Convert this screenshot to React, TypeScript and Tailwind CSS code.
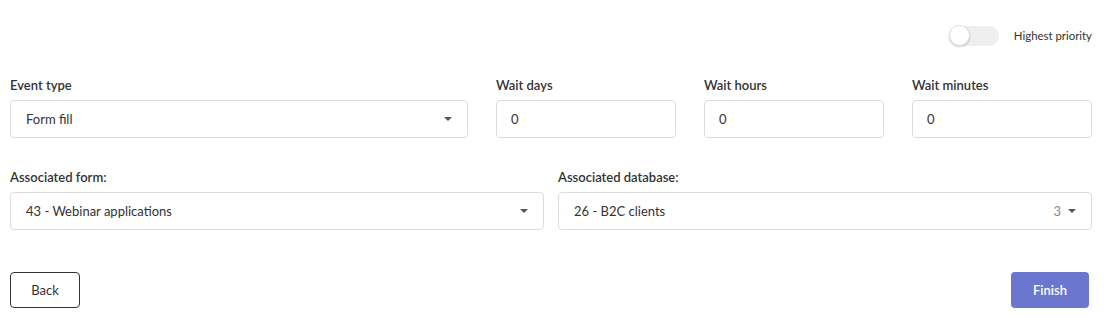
import React from "react";

const Caret = () => (
  <svg width="8" height="4" viewBox="0 0 8 4" className="shrink-0">
    <path d="M0 0 L8 0 L4 4 Z" fill="#555" />
  </svg>
);

function Label({ children }: { children: React.ReactNode }) {
  return (
    <div className="h-[16px] leading-[16px] pt-[1px] text-[13px] font-semibold text-[#333] mb-[8px]">
      {children}
    </div>
  );
}

function Select({ value, count }: { value: string; count?: string }) {
  return (
    <div className="h-[38px] border border-[#dcdcdc] rounded-[4px] bg-white flex items-center pl-[15px] pr-[15px] text-[13px] text-[#333]">
      <span className="flex-1 pt-[2px]">{value}</span>
      {count && <span className="text-[#888] mr-[7px] pt-[2px]">{count}</span>}
      <Caret />
    </div>
  );
}

function Input({ value }: { value: string }) {
  return (
    <div className="h-[38px] border border-[#dcdcdc] rounded-[4px] bg-white flex items-center pl-[14px] pt-[2px] text-[13px] text-[#333]">
      {value}
    </div>
  );
}

export default function App() {
  return (
    <div
      className="w-[1104px] h-[318px] bg-white pl-[10px] pr-[12px] pt-[25px]"
      style={{ fontFamily: "Lato, 'Noto Sans', sans-serif" }}
    >
      <div className="flex justify-end items-center h-[21px]">
        <div className="relative w-[50px] h-[20px] rounded-full bg-[#efefef]">
          <div className="absolute left-0 top-[-0.5px] w-[21px] h-[21px] rounded-full bg-white border border-[#e0e0e0] shadow-[0_1px_2px_rgba(0,0,0,0.2)]" />
        </div>
        <span className="ml-[15px] pt-[1px] text-[11.4px] text-[#333]">Highest priority</span>
      </div>

      <div className="mt-[30px] flex gap-[28px]">
        <div className="w-[458px]">
          <Label>Event type</Label>
          <Select value="Form fill" />
        </div>
        <div className="w-[180px]">
          <Label>Wait days</Label>
          <Input value="0" />
        </div>
        <div className="w-[180px]">
          <Label>Wait hours</Label>
          <Input value="0" />
        </div>
        <div className="w-[180px]">
          <Label>Wait minutes</Label>
          <Input value="0" />
        </div>
      </div>

      <div className="mt-[30px] flex gap-[14px]">
        <div className="flex-1">
          <Label>Associated form:</Label>
          <Select value="43 - Webinar applications" />
        </div>
        <div className="flex-1">
          <Label>Associated database:</Label>
          <Select value="26 - B2C clients" count="3" />
        </div>
      </div>

      <div className="mt-[42px] flex justify-between items-center pr-[3px]">
        <button className="w-[70px] h-[36px] pt-[2px] border border-[#333] rounded-[4px] text-[13px] text-[#333] bg-white">
          Back
        </button>
        <button className="w-[78px] h-[36px] pt-[2px] rounded-[4px] text-[13px] font-semibold text-white bg-[#6b77cf]">
          Finish
        </button>
      </div>
    </div>
  );
}
